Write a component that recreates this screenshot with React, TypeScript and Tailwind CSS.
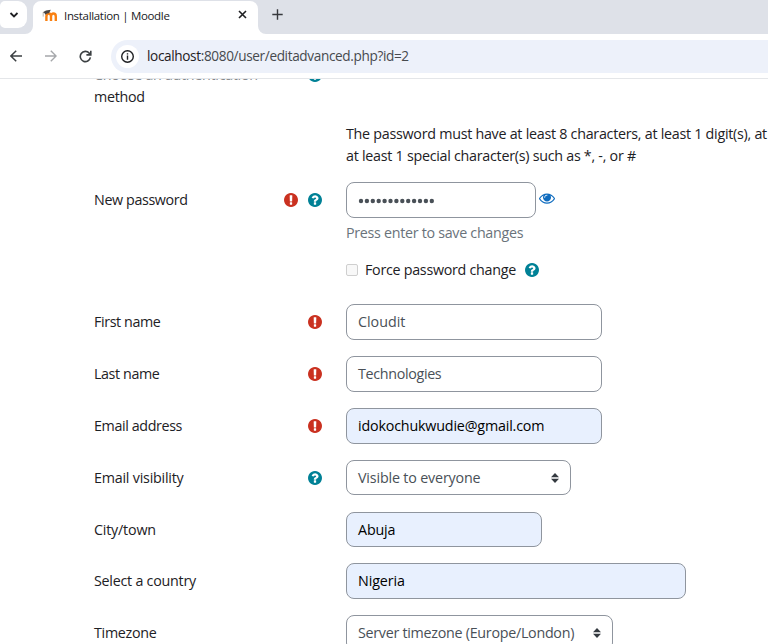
import React from "react";

function Required() {
  return (
    <svg className="-mr-[0.4px] size-[14px] shrink-0" viewBox="0 128 1536 1536" fill="#ca3120">
      <path d="M768 128q209 0 385.5 103t279.5 279.5 103 385.5-103 385.5-279.5 279.5-385.5 103-385.5-103-279.5-279.5-103-385.5 103-385.5 279.5-279.5 385.5-103zm128 1247v-190q0-14-9-23.5t-22-9.5h-192q-13 0-23 10t-10 23v190q0 13 10 23t23 10h192q13 0 22-9.5t9-23.5zm-2-344l18-621q0-12-10-18-10-8-24-8h-220q-14 0-24 8-10 6-10 18l17 621q0 10 10 17.5t24 7.5h185q14 0 23.5-7.5t10.5-17.5z" />
    </svg>
  );
}

function Help() {
  return (
    <svg className="size-[14px] shrink-0" viewBox="0 128 1536 1536" fill="#008196">
      <path d="M896 1376v-192q0-14-9-23t-23-9h-192q-14 0-23 9t-9 23v192q0 14 9 23t23 9h192q14 0 23-9t9-23zm256-672q0-88-55.5-163t-138.5-116-170-41q-243 0-371 213-15 24 8 42l132 100q7 6 19 6 16 0 25-12 53-68 86-92 34-24 86-24 48 0 85.5 26t37.5 59q0 38-20 61t-68 45q-63 28-115.5 86.5t-52.5 125.5v36q0 14 9 23t23 9h192q14 0 23-9t9-23q0-19 21.5-49.5t54.5-49.5q32-18 49-28.5t46-35 44.5-48 28-60.5 12.5-81zm384 192q0 209-103 385.5t-279.5 279.5-385.5 103-385.5-103-279.5-279.5-103-385.5 103-385.5 279.5-279.5 385.5-103 385.5 103 279.5 279.5 103 385.5z" />
    </svg>
  );
}

function Eye() {
  return (
    <svg className="mb-[3px] ml-[3px] size-[16px] shrink-0" viewBox="0 0 1792 1792" fill="#0f6cbf">
      <path d="M1664 960q-152-236-381-353 61 104 61 225 0 185-131.5 316.5t-316.5 131.5-316.5-131.5-131.5-316.5q0-121 61-225-229 117-381 353 133 205 333.5 326.5t434.5 121.5 434.5-121.5 333.5-326.5zm-720-384q0-20-14-34t-34-14q-125 0-214.5 89.5t-89.5 214.5q0 20 14 34t34 14 34-14 14-34q0-86 61-147t147-61q20 0 34-14t14-34zm848 384q0 34-20 69-140 230-376.5 368.5t-499.5 138.5-499.5-139-376.5-368q-20-35-20-69t20-69q140-229 376.5-368t499.5-139 499.5 139 376.5 368q20 35 20 69z" />
    </svg>
  );
}

function MoodleLogo() {
  return (
    <svg className="mb-[4px] h-[13px] w-[16px] shrink-0" viewBox="0 0 16 13" fill="none">
      <path d="M4.4 12V7.4C4.4 5.4 5.4 4.5 6.7 4.5S9 5.5 9 7.4V12M9 12V7.4C9 5.4 10.1 4.5 11.4 4.5S13.8 5.5 13.8 7.4V12" stroke="#f98012" strokeWidth="2.4" />
      <path d="M0.8 3.2L4 1.6L8.8 0.8L6.9 4.4C5.6 3.8 4.4 4.7 3.4 5.8L2.4 3.9Z" fill="#4a4543" />
      <path d="M1.2 3.3V7.6" stroke="#8f8782" strokeWidth="0.6" />
    </svg>
  );
}

function SelectArrows() {
  return (
    <svg className="h-[10px] w-[8px] shrink-0" viewBox="0 0 8 10" fill="#343a40">
      <path d="M4 0L8 4.3H0Z M4 10L0 5.7H8Z" />
    </svg>
  );
}

function PasswordDots() {
  return (
    <svg className="mt-[2px] h-[6px] w-[80px]" viewBox="0 0 80 6" fill="#495057">
      {Array.from({ length: 13 }, (_, i) => (
        <circle key={i} cx={3 + i * 5.9} cy={3} r={2.2} />
      ))}
    </svg>
  );
}

function Browser() {
  return (
    <header className="z-10 shrink-0 border-b border-[#e4e6e9]">
      <div className="flex h-[34px] bg-[#dee1e8]">
        <div className="flex w-[33px] items-start">
          <button className="mt-px flex h-[27px] w-[27px] items-center justify-center rounded-r-[9px] rounded-l-[5px] bg-white">
            <svg className="size-[10px]" viewBox="0 0 10 10" fill="none" stroke="#1f2023" strokeWidth="1.8">
              <path d="M1.5 3L5 6.5L8.5 3" />
            </svg>
          </button>
        </div>
        <div className="relative mt-px flex w-[225px] items-center rounded-t-[8px] bg-white pr-[11px] pl-[9px]">
          <svg className="absolute bottom-0 -left-[8px] size-[8px]" viewBox="0 0 8 8" fill="white">
            <path d="M8 0V8H0A8 8 0 0 0 8 0Z" />
          </svg>
          <svg className="absolute -right-[8px] bottom-0 size-[8px]" viewBox="0 0 8 8" fill="white">
            <path d="M0 0V8H8A8 8 0 0 1 0 0Z" />
          </svg>
          <MoodleLogo />
          <span className="mb-[4px] ml-[6px] grow text-[11.5px] tracking-[-0.32px] whitespace-nowrap text-[#202124]">Installation | Moodle</span>
          <svg className="mb-[6px] size-[9px]" viewBox="0 0 9 9" fill="none" stroke="#1f2023" strokeWidth="1.6">
            <path d="M1 1L8 8M8 1L1 8" />
          </svg>
        </div>
        <svg className="mt-[9px] ml-[14px] size-[11px]" viewBox="0 0 11 11" fill="none" stroke="#37393d" strokeWidth="1.4">
          <path d="M5.5 0.3V10.7M0.3 5.5H10.7" />
        </svg>
      </div>
      <div className="flex h-[44px] items-center bg-white pl-[10px]">
        <svg className="size-[12px]" viewBox="0 0 12 12" fill="none" stroke="#3c4043" strokeWidth="1.5">
          <path d="M12 6H1M6.2 0.7L0.9 6L6.2 11.3" />
        </svg>
        <svg className="ml-[23px] size-[12px]" viewBox="0 0 12 12" fill="none" stroke="#a5a7aa" strokeWidth="1.4">
          <path d="M0 6H11M5.8 0.7L11.1 6L5.8 11.3" />
        </svg>
        <svg className="ml-[22px] size-[13px]" viewBox="0 0 13 13" fill="none" stroke="#3c4043" strokeWidth="1.6">
          <path d="M11.4 7.4A5.1 5.1 0 1 1 10.2 3.1L11.6 4.5M11.8 0.8V4.9H7.4" />
        </svg>
        <div className="ml-[19px] flex h-[33px] grow items-center rounded-l-full bg-[#edf1fa] pl-[5px]">
          <span className="flex size-[23px] items-center justify-center rounded-full bg-white">
            <svg className="size-[13px]" viewBox="0 0 13 13" fill="none" stroke="#1f2023" strokeWidth="1.4">
              <circle cx="6.5" cy="6.5" r="5.8" />
              <path d="M6.5 5.6V9.7M6.5 3.2V4.6" />
            </svg>
          </span>
          <span className="mt-px ml-[8px] text-[13.6px] tracking-[-0.36px] whitespace-nowrap text-[#474a4e]">
            <span className="text-[#1f2023]">localhost</span>:8080/user/editadvanced.php?id=2
          </span>
        </div>
      </div>
    </header>
  );
}

type RowProps = {
  label: string;
  icons?: React.ReactNode;
  tracking?: string;
  children: React.ReactNode;
};

function Row({ label, icons, tracking = "", children }: RowProps) {
  return (
    <div className="flex h-[35.6px] items-center">
      <div className="mr-[24px] flex w-[228px] shrink-0 items-center gap-[10px]">
        <span className={`grow whitespace-nowrap ${tracking}`}>{label}</span>
        {icons}
      </div>
      {children}
    </div>
  );
}

function Field({ className, children }: { className: string; children: React.ReactNode }) {
  return (
    <div className={`flex h-full shrink-0 items-center whitespace-nowrap rounded-[8px] border border-[#8f959e] px-[11px] ${className}`}>
      {children}
    </div>
  );
}

export default function App() {
  return (
    <div className="flex h-[644px] w-[768px] flex-col overflow-hidden bg-white font-['Open_Sans',sans-serif] text-[14.3px] text-[#1d2125]">
      <Browser />
      <main className="flex min-h-0 grow flex-col overflow-hidden pl-[94px]">
        <div className="-mt-[15px] flex h-[44px] shrink-0">
          <div className="w-[214px] leading-[22px] tracking-[-0.3px]">
            <span className="text-[#85888b]">Choose an authentication</span>
            <br />
            method
          </div>
          <div className="pt-[4px]">
            <Help />
          </div>
        </div>
        <p className="mt-[15px] ml-[252px] shrink-0 leading-[22px] tracking-[-0.27px] whitespace-nowrap">
          The password must have at least 8 characters, at least 1 digit(s), at
          <br />
          at least 1 special character(s) such as *, -, or #
        </p>
        <div className="mt-[15px] shrink-0">
          <Row label="New password" tracking="tracking-[-0.38px]" icons={<><Required /><Help /></>}>
            <Field className="w-[190px] text-[#495057]">
              <PasswordDots />
            </Field>
            <Eye />
          </Row>
          <div className="ml-[252px] flex h-[30px] items-center tracking-[-0.3px] text-[#6a737b]">Press enter to save changes</div>
          <div className="ml-[252px] mt-[10px] flex h-[24px] items-center">
            <span className="size-[12px] rounded-[2px] border border-[#cfcfcf] bg-[#f8f8f8]" />
            <span className="mr-[9px] ml-[7px] tracking-[-0.28px]">Force password change</span>
            <Help />
          </div>
        </div>
        <div className="mt-[22.7px] flex shrink-0 flex-col gap-[16.23px]">
          <Row label="First name" tracking="tracking-[-0.4px]" icons={<Required />}>
            <Field className="w-[256px] text-[#495057]">Cloudit</Field>
          </Row>
          <Row label="Last name" tracking="tracking-[-0.4px]" icons={<Required />}>
            <Field className="w-[256px] tracking-[-0.33px] text-[#495057]">Technologies</Field>
          </Row>
          <Row label="Email address" tracking="tracking-[-0.38px]" icons={<Required />}>
            <Field className="w-[256px] bg-[#e8f0fe] tracking-[-0.18px] text-black">idokochukwudie@gmail.com</Field>
          </Row>
          <Row label="Email visibility" tracking="tracking-[-0.22px]" icons={<Help />}>
            <Field className="w-[225px] justify-between tracking-[-0.17px] text-[#495057]">
              Visible to everyone
              <SelectArrows />
            </Field>
          </Row>
          <Row label="City/town" tracking="tracking-[-0.2px]">
            <Field className="w-[196px] bg-[#e8f0fe] tracking-[-0.15px] text-black">Abuja</Field>
          </Row>
          <Row label="Select a country" tracking="tracking-[-0.25px]">
            <Field className="w-[340px] bg-[#e8f0fe] tracking-[-0.12px] text-black">Nigeria</Field>
          </Row>
          <Row label="Timezone" tracking="tracking-[-0.3px]">
            <Field className="w-[267px] justify-between tracking-[-0.28px] text-[#495057]">
              Server timezone (Europe/London)
              <SelectArrows />
            </Field>
          </Row>
        </div>
      </main>
    </div>
  );
}
